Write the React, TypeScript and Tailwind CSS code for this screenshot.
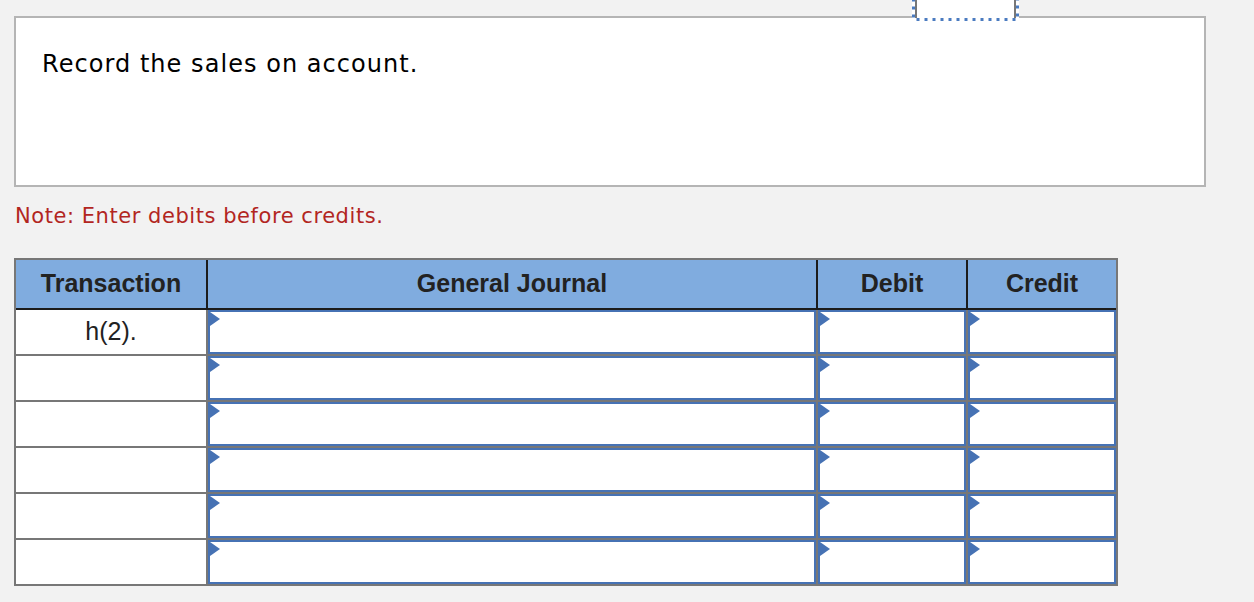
const rows = ['h(2).', '', '', '', '', '']

function Marker() {
      return (
            <svg className="absolute left-0 top-0" width="10" height="14" viewBox="0 0 10 14">
                  <polygon points="0,0 10,7 0,14" fill="#4672b4" />
            </svg>
      )
}

function InputCell({ width, last }: { width: string; last?: boolean }) {
      return (
            <div className={`${width} h-full ${last ? '' : 'border-r-2 border-[#777]'}`}>
                  <div className="relative h-full border-2 border-[#4672b4] bg-white">
                        <Marker />
                  </div>
            </div>
      )
}

export default function App() {
      return (
            <div className="relative min-h-[602px] bg-[#f2f2f2] pt-4 font-['Liberation_Sans',Arial,sans-serif]">
                  {/* tab sticking out of the question box */}
                  <div className="absolute left-[912px] top-[-12px] h-[33px] w-[107px] bg-white">
                        <div className="mx-[3px] h-[30px] border-x-2 border-[#777]" />
                        <svg className="absolute inset-0" width="107" height="33" viewBox="0 0 107 33">
                              <rect x="1.5" y="1.5" width="104" height="30" fill="none" stroke="#4a7bc0" strokeWidth="3" strokeDasharray="3 5" />
                        </svg>
                  </div>

                  <div className="ml-[14px] h-[171px] w-[1192px] border-2 border-[#b5b5b5] bg-white pl-[26px] pt-[32px]">
                        <p className="font-['DejaVu_Sans',Verdana,sans-serif] text-[24px] leading-[28px] tracking-[1.05px] text-black">
                              Record the sales on account.
                        </p>
                  </div>

                  <p className="ml-[15px] mt-[17px] font-['DejaVu_Sans',Verdana,sans-serif] text-[21px] leading-[24px] tracking-[0.55px] text-[#b2261f]">
                        Note: Enter debits before credits.
                  </p>

                  <div className="ml-[14px] mt-[30px] w-[1104px] border-2 border-[#777]">
                        <div className="flex h-[50px] border-b-2 border-[#1c1c1c] bg-[#80acdf] text-[25px] font-bold text-[#222]">
                              <div className="flex w-[192px] items-center justify-center border-r-2 border-[#1c1c1c]">Transaction</div>
                              <div className="flex w-[610px] items-center justify-center border-r-2 border-[#1c1c1c]">General Journal</div>
                              <div className="flex w-[150px] items-center justify-center border-r-2 border-[#1c1c1c]">Debit</div>
                              <div className="flex w-[148px] items-center justify-center">Credit</div>
                        </div>
                        {rows.map((label, i) => (
                              <div
                                    key={i}
                                    className={`flex ${i < rows.length - 1 ? 'h-[46px] border-b-2 border-[#777]' : 'h-[44px]'}`}
                              >
                                    <div className="flex w-[192px] items-center justify-center border-r-2 border-[#777] bg-white text-[25px] text-[#222]">
                                          {label}
                                    </div>
                                    <InputCell width="w-[610px]" />
                                    <InputCell width="w-[150px]" />
                                    <InputCell width="w-[148px]" last />
                              </div>
                        ))}
                  </div>
            </div>
      )
}
